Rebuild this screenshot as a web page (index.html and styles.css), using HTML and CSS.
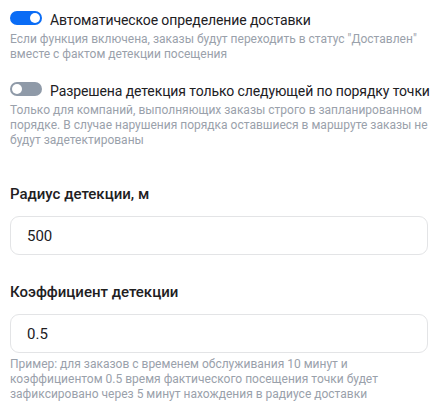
FILE: index.html
```html
<!DOCTYPE html>
<html lang="ru">
<head>
<meta charset="utf-8">
<link rel="stylesheet" href="styles.css">
</head>
<body>
<div class="page">
  <section class="option option-first">
    <div class="option-head">
      <span class="switch switch-on"><span class="knob"></span></span>
      <span class="option-title">Автоматическое определение доставки</span>
    </div>
    <p class="hint">Если функция включена, заказы будут переходить в статус "Доставлен" вместе с фактом детекции посещения</p>
  </section>
  <section class="option option-second">
    <div class="option-head">
      <span class="switch"><span class="knob"></span></span>
      <span class="option-title">Разрешена детекция только следующей по порядку точки</span>
    </div>
    <p class="hint">Только для компаний, выполняющих заказы строго в запланированном порядке. В случае нарушения порядка оставшиеся в маршруте заказы не будут задетектированы</p>
  </section>
  <section class="field field-first">
    <label class="field-label">Радиус детекции, м</label>
    <div class="input">500</div>
  </section>
  <section class="field field-second">
    <label class="field-label">Коэффициент детекции</label>
    <div class="input">0.5</div>
    <p class="hint field-hint">Пример: для заказов с временем обслуживания 10 минут и коэффициентом 0.5 время фактического посещения точки будет зафиксировано через 5 минут нахождения в радиусе доставки</p>
  </section>
</div>
</body>
</html>
```
FILE: styles.css
```css
html, body {
  margin: 0;
  padding: 0;
  background: #ffffff;
}
body {
  font-family: Roboto, "Noto Sans", sans-serif;
  color: #21201f;
}
.page {
  padding: 10px 10px 0 10px;
  display: flex;
  flex-direction: column;
}
.option-head {
  display: flex;
  align-items: flex-start;
  gap: 8px;
}
.option-title {
  font-size: 14px;
  line-height: 20px;
  white-space: nowrap;
  letter-spacing: -0.1px;
}
.switch {
  flex: none;
  width: 32px;
  height: 14px;
  margin-top: 1px;
  border-radius: 7px;
  background: #8f9aa8;
  position: relative;
}
.switch-on {
  background: #0a6cf5;
}
.knob {
  position: absolute;
  top: 2px;
  left: 2px;
  width: 10px;
  height: 10px;
  border-radius: 50%;
  background: #ffffff;
}
.switch-on .knob {
  left: 20px;
}
.hint {
  margin: 2px 0 0 0;
  font-size: 12px;
  line-height: 15px;
  color: #9aa1ab;
}
.option-second {
  margin-top: 19px;
}
.field {
  display: flex;
  flex-direction: column;
}
.field-first {
  margin-top: 34px;
}
.field-second {
  margin-top: 25px;
}
.field-label {
  font-size: 15px;
  line-height: 24px;
  font-weight: 500;
  color: #21201f;
}
.input {
  margin-top: 10px;
  box-sizing: border-box;
  height: 39px;
  border: 1px solid #e3e4e6;
  border-radius: 9px;
  padding: 0 16px;
  display: flex;
  align-items: center;
  font-size: 15px;
  color: #21201f;
}
.field-hint {
  margin-top: 4px;
}
```
